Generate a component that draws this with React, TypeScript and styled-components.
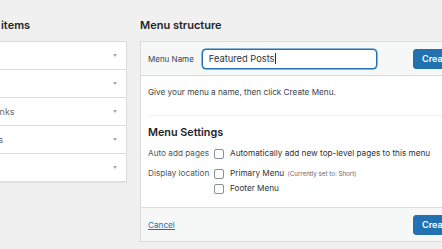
import React from 'react';
import styled, { createGlobalStyle } from 'styled-components';

const GlobalStyle = createGlobalStyle`
    html, body {
        margin: 0;
        padding: 0;
        background: #f0f0f1;
        overflow: hidden;
    }
    body {
        font-family: Inter, 'Liberation Sans', sans-serif;
        color: #1d2327;
        -webkit-font-smoothing: antialiased;
    }
`;

const Page = styled.div`
    display: flex;
    column-gap: 13px;
    padding-top: 16px;
    margin-left: -56px;
    width: 560px;
`;

const Column = styled.div<{ $width: number }>`
    flex: 0 0 ${(p) => p.$width}px;
    display: flex;
    flex-direction: column;
`;

const Heading = styled.h2`
    margin: 0 0 7px;
    font-size: 11px;
    line-height: 18px;
    font-weight: 600;
    color: #1d2327;
`;

const Accordion = styled.div`
    background: #fff;
    border: 1px solid #dcdcde;
    box-shadow: 0 1px 1px rgba(0, 0, 0, 0.04);
`;

const AccordionRow = styled.div`
    display: flex;
    align-items: center;
    justify-content: space-between;
    height: 27px;
    padding: 0 9px 0 12px;
    font-size: 9px;
    color: #646970;
    border-bottom: 1px solid #dcdcde;

    &:last-child {
        border-bottom: 0;
    }
`;

const Arrow = styled.span`
    width: 0;
    height: 0;
    border-left: 2.5px solid transparent;
    border-right: 2.5px solid transparent;
    border-top: 3px solid #a7aaad;
`;

const Panel = styled.div`
    background: #fff;
    border: 1px solid #dcdcde;
    box-shadow: 0 1px 1px rgba(0, 0, 0, 0.04);
`;

const Bar = styled.div<{ $position: 'top' | 'bottom' }>`
    display: flex;
    align-items: center;
    height: 33px;
    padding: 0 7px;
    background: #f6f7f7;
    ${(p) =>
        p.$position === 'top'
            ? 'border-bottom: 1px solid #dcdcde;'
            : 'border-top: 1px solid #dcdcde;'}
`;

const Label = styled.span`
    font-size: 8px;
    color: #3c434a;
    margin-right: 8px;
`;

const NameInput = styled.div`
    box-sizing: border-box;
    width: 175px;
    height: 20px;
    display: flex;
    align-items: center;
    padding: 0 6px;
    border: 1px solid #2271b1;
    box-shadow: 0 0 0 0.5px #2271b1;
    border-radius: 4px;
    background: #fff;
    font-size: 9.3px;
    color: #2c3338;
`;

const Caret = styled.span`
    display: inline-block;
    width: 1px;
    height: 11px;
    background: #2c3338;
`;

const PrimaryButton = styled.button`
    margin-left: auto;
    height: 20px;
    padding: 0 8px;
    border: 1px solid #2271b1;
    border-radius: 3px;
    background: #2271b1;
    color: #fff;
    font-family: inherit;
    font-size: 9px;
    font-weight: 600;
    white-space: nowrap;
`;

const Body = styled.div`
    padding: 10px 7px 0;
    background: #fff;
`;

const Intro = styled.p`
    margin: 0;
    font-size: 8.2px;
    line-height: 12px;
    color: #3c434a;
    padding-bottom: 17px;
    border-bottom: 1px solid #f0f0f1;
`;

const SubHeading = styled.h3`
    margin: 9px 0 6px;
    font-size: 10.8px;
    line-height: 16px;
    font-weight: 600;
    color: #1d2327;
`;

const SettingsGrid = styled.div`
    display: grid;
    grid-template-columns: 66px 1fr;
    row-gap: 7px;
    padding-bottom: 12px;
    font-size: 8.2px;
`;

const SettingLabel = styled.div`
    color: #50575e;
    line-height: 13px;
`;

const Options = styled.div`
    display: flex;
    flex-direction: column;
    row-gap: 2px;
`;

const Option = styled.label`
    display: flex;
    align-items: center;
    column-gap: 6px;
    line-height: 13px;
    color: #2c3338;
`;

const Box = styled.span`
    box-sizing: border-box;
    width: 10px;
    height: 10px;
    border: 1px solid #8c8f94;
    border-radius: 2px;
    background: #fff;
`;

const Note = styled.span`
    font-size: 6.2px;
    color: #646970;
    margin-left: 1px;
`;

const CancelLink = styled.a`
    font-size: 8.2px;
    color: #2271b1;
    text-decoration: underline;
`;

const items = ['Pages', 'Posts', 'Custom Links', 'Categories', 'Tags'];

export default function App() {
    return (
        <>
            <GlobalStyle />
            <Page>
                <Column $width={183}>
                    <Heading>Add menu items</Heading>
                    <Accordion>
                        {items.map((item) => (
                            <AccordionRow key={item}>
                                <span>{item}</span>
                                <Arrow />
                            </AccordionRow>
                        ))}
                    </Accordion>
                </Column>
                <Column $width={355}>
                    <Heading>Menu structure</Heading>
                    <Panel>
                        <Bar $position='top'>
                            <Label>Menu Name</Label>
                            <NameInput>
                                Featured Posts
                                <Caret />
                            </NameInput>
                            <PrimaryButton>Create Menu</PrimaryButton>
                        </Bar>
                        <Body>
                            <Intro>
                                Give your menu a name, then click Create Menu.
                            </Intro>
                            <SubHeading>Menu Settings</SubHeading>
                            <SettingsGrid>
                                <SettingLabel>Auto add pages</SettingLabel>
                                <Options>
                                    <Option>
                                        <Box />
                                        Automatically add new top-level pages to
                                        this menu
                                    </Option>
                                </Options>
                                <SettingLabel>Display location</SettingLabel>
                                <Options>
                                    <Option>
                                        <Box />
                                        <span>
                                            Primary Menu{' '}
                                            <Note>(Currently set to: Short)</Note>
                                        </span>
                                    </Option>
                                    <Option>
                                        <Box />
                                        Footer Menu
                                    </Option>
                                </Options>
                            </SettingsGrid>
                        </Body>
                        <Bar $position='bottom'>
                            <CancelLink href='#'>Cancel</CancelLink>
                            <PrimaryButton>Create Menu</PrimaryButton>
                        </Bar>
                    </Panel>
                </Column>
            </Page>
        </>
    );
}
